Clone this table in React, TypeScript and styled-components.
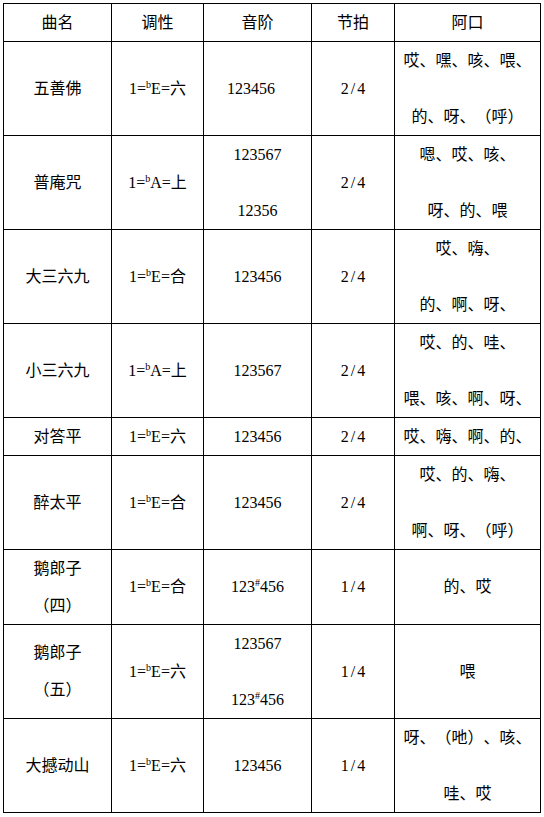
import React from "react";
import styled, { createGlobalStyle } from "styled-components";

const GlobalStyle = createGlobalStyle`
  html, body {
    margin: 0;
    padding: 0;
    background: #ffffff;
  }
  body {
    font-family: "Liberation Serif", "Noto Sans CJK SC", serif;
    font-size: 16px;
    color: #000000;
    text-spacing-trim: space-all;
  }
`;

const Page = styled.div`
  padding: 3px;
`;

const Table = styled.div`
  display: grid;
  grid-template-columns: 107px 91px 107px 82px 145px;
  grid-template-rows: 37px 93px 93px 93px 93px 37px 93px 74px 93px 93px;
  gap: 1px;
  padding: 1px;
  background: #000000;
  width: max-content;
`;

const Cell = styled.div<{ $gap?: number; $indent?: number }>`
  background: #ffffff;
  display: flex;
  flex-direction: column;
  justify-content: center;
  align-items: ${(p) => (p.$indent ? "flex-start" : "center")};
  padding-left: ${(p) => (p.$indent ? `${p.$indent}px` : "0")};
  gap: ${(p) => p.$gap ?? 0}px;
  overflow: hidden;
`;

const Line = styled.div`
  line-height: 16px;
  height: 16px;
  white-space: nowrap;
  text-spacing-trim: space-all;
`;

const Sup = styled.sup`
  font-size: 10px;
  line-height: 0;
  vertical-align: 6px;
`;

const Meter = styled.span`
  letter-spacing: 2px;
  margin-right: -2px;
`;

const Key = ({ note, name }: { note: string; name: string }) => (
  <>
    1=<Sup>b</Sup>
    {note}={name}
  </>
);

const Sharp = ({ before, after }: { before: string; after: string }) => (
  <>
    {before}
    <Sup>#</Sup>
    {after}
  </>
);

type CellData = { lines: React.ReactNode[]; gap?: number; indent?: number };

const SONG = 40;
const TITLE = 21;

const m = (v: string) => <Meter>{v}</Meter>;

const rows: CellData[][] = [
  [
    { lines: ["曲名"] },
    { lines: ["调性"] },
    { lines: ["音阶"] },
    { lines: ["节拍"] },
    { lines: ["阿口"] },
  ],
  [
    { lines: ["五善佛"] },
    { lines: [<Key note="E" name="六" />] },
    { lines: ["123456"], indent: 23 },
    { lines: [m("2/4")] },
    { lines: ["哎、嘿、咳、喂、", "的、呀、（呼）"], gap: SONG },
  ],
  [
    { lines: ["普庵咒"] },
    { lines: [<Key note="A" name="上" />] },
    { lines: ["123567", "12356"], gap: SONG },
    { lines: [m("2/4")] },
    { lines: ["嗯、哎、咳、", "呀、的、喂"], gap: SONG },
  ],
  [
    { lines: ["大三六九"] },
    { lines: [<Key note="E" name="合" />] },
    { lines: ["123456"] },
    { lines: [m("2/4")] },
    { lines: ["哎、嗨、", "的、啊、呀、"], gap: SONG },
  ],
  [
    { lines: ["小三六九"] },
    { lines: [<Key note="A" name="上" />] },
    { lines: ["123567"] },
    { lines: [m("2/4")] },
    { lines: ["哎、的、哇、", "喂、咳、啊、呀、"], gap: SONG },
  ],
  [
    { lines: ["对答平"] },
    { lines: [<Key note="E" name="六" />] },
    { lines: ["123456"] },
    { lines: [m("2/4")] },
    { lines: ["哎、嗨、啊、的、"] },
  ],
  [
    { lines: ["醉太平"] },
    { lines: [<Key note="E" name="合" />] },
    { lines: ["123456"] },
    { lines: [m("2/4")] },
    { lines: ["哎、的、嗨、", "啊、呀、（呼）"], gap: SONG },
  ],
  [
    { lines: ["鹅郎子", "（四）"], gap: TITLE },
    { lines: [<Key note="E" name="合" />] },
    { lines: [<Sharp before="123" after="456" />] },
    { lines: [m("1/4")] },
    { lines: ["的、哎"] },
  ],
  [
    { lines: ["鹅郎子", "（五）"], gap: TITLE },
    { lines: [<Key note="E" name="六" />] },
    { lines: ["123567", <Sharp before="123" after="456" />], gap: SONG },
    { lines: [m("1/4")] },
    { lines: ["喂"] },
  ],
  [
    { lines: ["大撼动山"] },
    { lines: [<Key note="E" name="六" />] },
    { lines: ["123456"] },
    { lines: [m("1/4")] },
    { lines: ["呀、（吔）、咳、", "哇、哎"], gap: SONG },
  ],
];

export default function App() {
  return (
    <Page>
      <GlobalStyle />
      <Table>
        {rows.map((row, r) =>
          row.map((cell, c) => (
            <Cell key={`${r}-${c}`} $gap={cell.gap} $indent={cell.indent}>
              {cell.lines.map((line, i) => (
                <Line key={i}>{line}</Line>
              ))}
            </Cell>
          ))
        )}
      </Table>
    </Page>
  );
}
